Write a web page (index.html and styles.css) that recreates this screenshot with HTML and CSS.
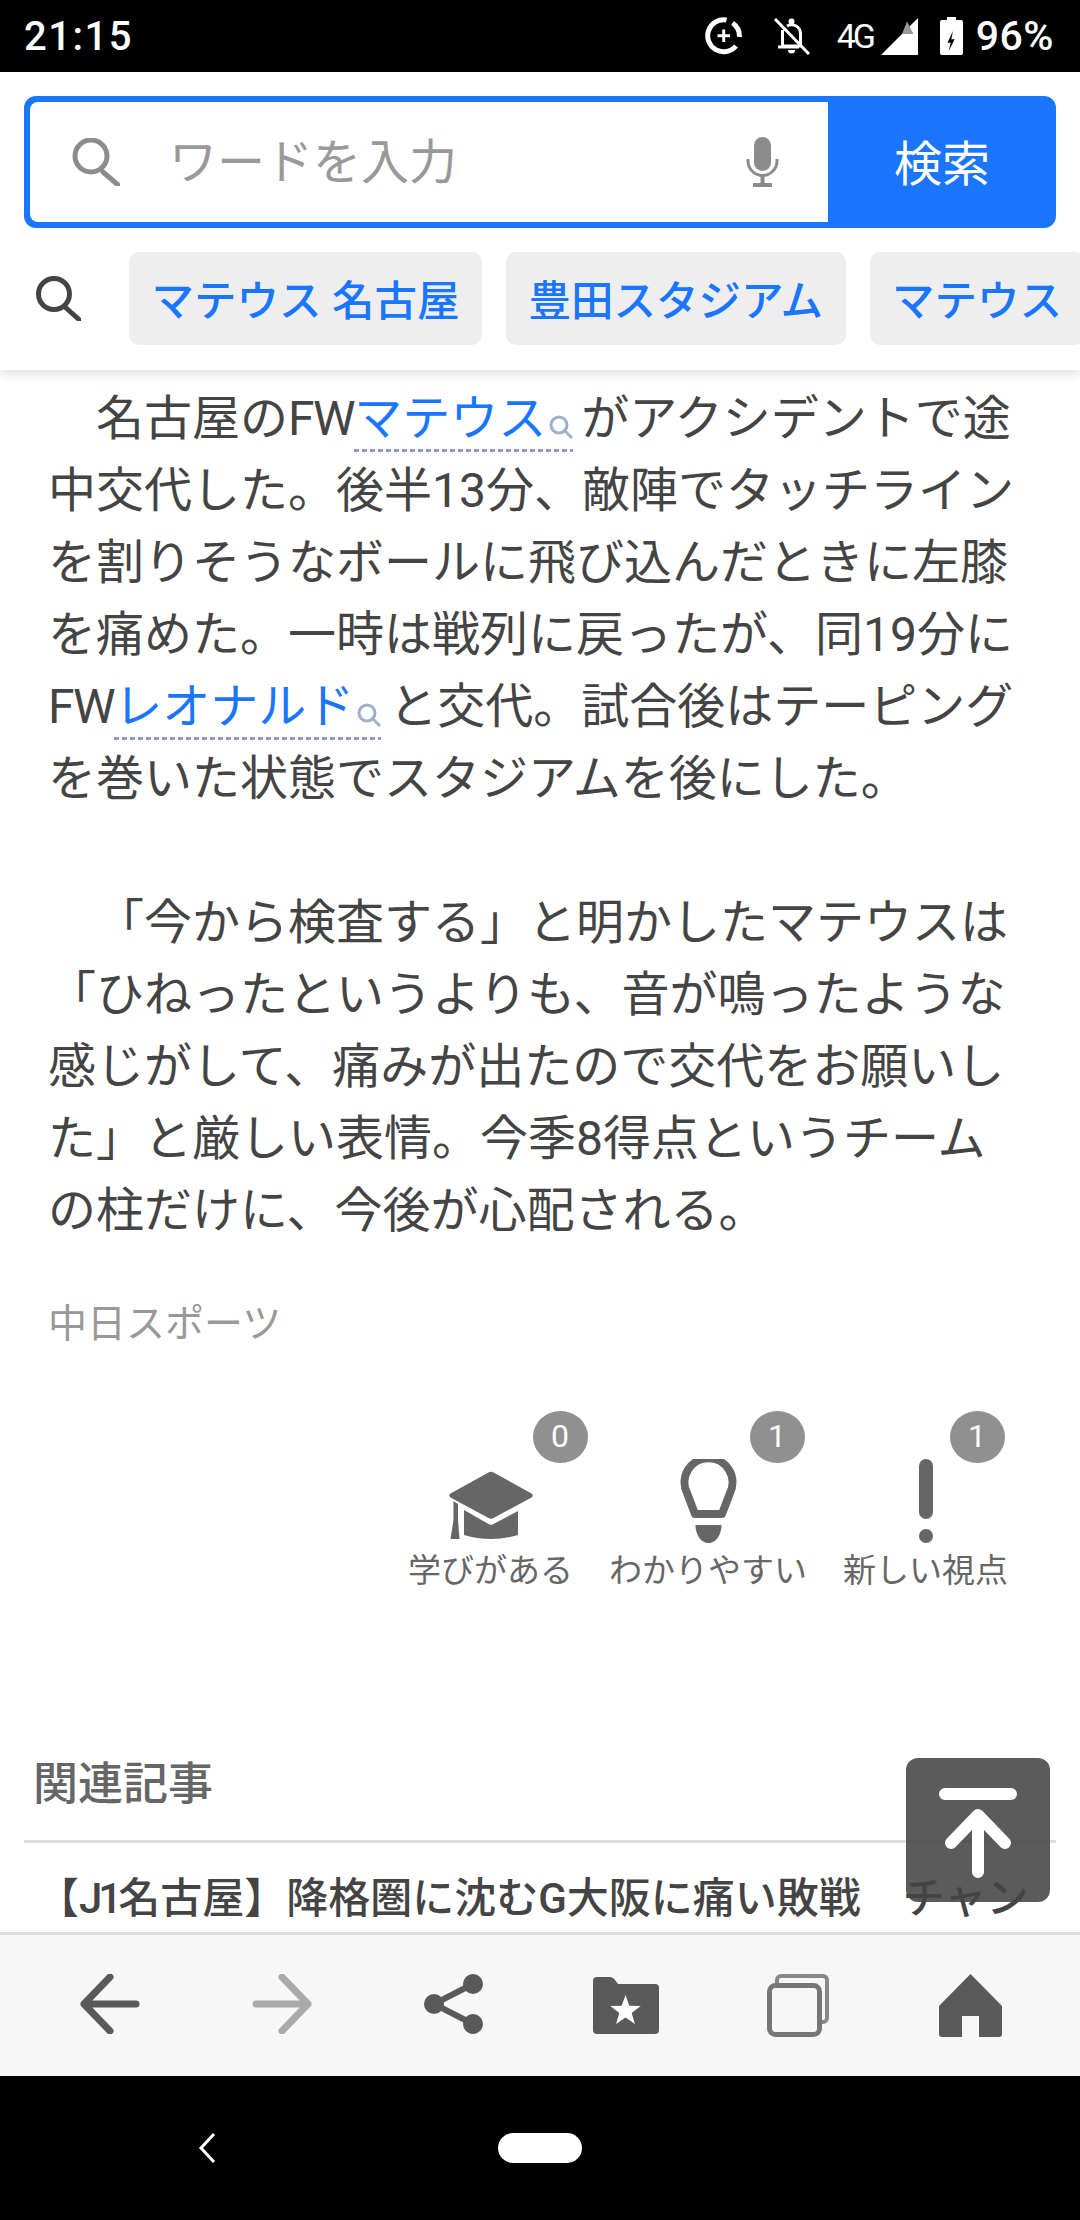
FILE: index.html
```html
<!DOCTYPE html>
<html lang="ja">
<head>
    <meta charset="UTF-8">
    <meta name="viewport" content="width=device-width, initial-scale=1.0">
    <title>マテウス 途中交代</title>
    <link rel="stylesheet" href="styles.css">
</head>
<body>
<div class="page">
    <div class="status-bar">
        <span class="status-time">21:15</span>
        <svg class="st-saver" width="37" height="38" viewBox="0 0 37 38"><path d="M21.5 3A16 16 0 1 0 31 29" fill="none" stroke="#fff" stroke-width="5"/><path d="M27.5 6A16 16 0 0 1 34.4 20" fill="none" stroke="#fff" stroke-width="5"/><path d="M18.7 12.5V25M12.5 18.7H25" stroke="#fff" stroke-width="3"/></svg>
        <svg class="st-bell" width="37" height="37" viewBox="0 0 37 37"><path d="M9.5 12V28H27.5V15A9 9 0 0 0 14 8" fill="none" stroke="#fff" stroke-width="3"/><path d="M5 29H26M2 1L36 36" stroke="#fff" stroke-width="3"/><circle cx="18.5" cy="3.5" r="3" fill="#fff"/><path d="M15 32H22A3.5 3.5 0 0 1 15 32Z" fill="#fff"/></svg>
        <span class="status-net">4G</span>
        <svg class="st-signal" width="37" height="37" viewBox="0 0 37 37"><polygon points="0,37 37,0 37,37" fill="#fff"/><polygon points="21,16 26,3.5 32.5,16" fill="#999"/></svg>
        <svg class="st-batt" width="23" height="38" viewBox="0 0 23 38"><path d="M7 0H16V3H21A2 2 0 0 1 23 5V36A2 2 0 0 1 21 38H2A2 2 0 0 1 0 36V5A2 2 0 0 1 2 3H7Z" fill="#fff"/><polygon points="13,14 7.5,25.7 10.7,25.7 8.7,34 14.7,22.3 11.3,22.3" fill="#000"/></svg>
        <span class="status-pct">96%</span>
    </div>

    <header class="site-header">
        <div class="search-box">
            <div class="search-field">
                <svg width="48" height="48" viewBox="0 0 48 48"><circle cx="19" cy="18" r="16" fill="none" stroke="#8c8c8c" stroke-width="5"/><path d="M31 34L45.5 46.5" stroke="#8c8c8c" stroke-width="5" stroke-linecap="round"/></svg>
                <span class="search-placeholder">ワードを入力</span>
                <svg class="search-mic" width="33" height="50" viewBox="0 0 33 50"><rect x="8" y="0" width="17" height="34" rx="8.5" fill="#8c8c8c"/><path d="M2 22V24A14.500 14.500 0 0 0 31 24V22" fill="none" stroke="#8c8c8c" stroke-width="3"/><path d="M16.500 38V46" stroke="#8c8c8c" stroke-width="4"/><rect x="7" y="46" width="19" height="4" fill="#8c8c8c"/></svg>
            </div>
            <div class="search-button">検索</div>
        </div>
        <div class="tag-row">
            <svg class="tag-icon" width="45" height="45" viewBox="0 0 45 45"><circle cx="18" cy="18" r="15.500" fill="none" stroke="#444" stroke-width="5"/><path d="M29 31L43 43.500" stroke="#444" stroke-width="5" stroke-linecap="round"/></svg>
            <a class="tag">マテウス 名古屋</a>
            <a class="tag">豊田スタジアム</a>
            <a class="tag">マテウス</a>
        </div>
    </header>

    <main class="content">
        <article class="article">
            <p>　名古屋の<span class="latin">FW</span><a class="kw">マテウス<svg width="24" height="24" viewBox="0 0 24 24"><circle cx="10" cy="10" r="8" fill="none" stroke="#9fb0cc" stroke-width="3"/><path d="M16 16L23 23" stroke="#9fb0cc" stroke-width="3"/></svg></a>がアクシデントで途中交代した。後半13分、敵陣でタッチラインを割りそうなボールに飛び込んだときに左膝を痛めた。一時は戦列に戻ったが、同19分に<span class="latin">FW</span><a class="kw">レオナルド<svg width="24" height="24" viewBox="0 0 24 24"><circle cx="10" cy="10" r="8" fill="none" stroke="#9fb0cc" stroke-width="3"/><path d="M16 16L23 23" stroke="#9fb0cc" stroke-width="3"/></svg></a>と交代。試合後はテーピングを巻いた状態でスタジアムを後にした。</p>
            <p class="quote">　「今から検査する」と明かしたマテウスは「ひねったというよりも、音が鳴ったような感じがして、痛みが出たので交代をお願いした」と厳しい表情。今季8得点というチームの柱だけに、今後が心配される。</p>
            <div class="credit">中日スポーツ</div>
        </article>

        <div class="reactions">
            <div class="reaction">
                <div class="reaction-icon">
                    <svg class="cap-icon" width="84" height="68" viewBox="0 0 84 68"><path d="M39.500 1.500Q42 0 44.500 1.500L82.500 22.500Q85 24.500 82.500 26.500L44.500 47Q42 48.500 39.500 47L1.500 26.500Q-1 24.500 1.500 22.500Z" fill="#666"/><path d="M15 39L39.500 53Q42 54.500 44.500 53L69 40V64Q56 68 42 68Q28 68 15 64Z" fill="#666"/><path d="M4.500 30L9 33V49L10.500 68H1.500L4.500 49Z" fill="#666"/></svg>
                    <span class="badge badge-cap">0</span>
                </div>
                <div class="reaction-label">学びがある</div>
            </div>
            <div class="reaction">
                <div class="reaction-icon">
                    <svg width="57" height="84" viewBox="0 0 57 84"><path d="M15 55L7 34A24 24 0 1 1 50 34L42 55Z" fill="none" stroke="#666" stroke-width="8" stroke-linejoin="round"/><path d="M15.500 66H41.500C41.500 76 36 84 28.500 84C21 84 15.500 76 15.500 66Z" fill="#666"/></svg>
                    <span class="badge badge-bulb">1</span>
                </div>
                <div class="reaction-label">わかりやすい</div>
            </div>
            <div class="reaction">
                <div class="reaction-icon">
                    <svg width="14" height="84" viewBox="0 0 14 84"><rect x="0" y="0" width="14" height="60" rx="7" fill="#666"/><circle cx="7" cy="77" r="7" fill="#666"/></svg>
                    <span class="badge badge-new">1</span>
                </div>
                <div class="reaction-label">新しい視点</div>
            </div>
        </div>

        <section class="related">
            <h2 class="related-title">関連記事</h2>
            <div class="related-item">【<span class="related-league">J1</span>名古屋】降格圏に沈むG大阪に痛い敗戦　チャン</div>
        </section>
    </main>

    <div class="to-top">
        <svg width="144" height="144" viewBox="0 0 144 144"><rect x="33" y="30" width="78" height="12" rx="6" fill="#fff"/><path d="M45 85L72 57L99 85M72 60V114" fill="none" stroke="#fff" stroke-width="12" stroke-linecap="round" stroke-linejoin="round"/></svg>
    </div>

    <nav class="toolbar">
        <div class="tool tool-raised"><svg width="60" height="60" viewBox="0 0 60 60"><path d="M30 3L4 30L30 57M4 30H56" fill="none" stroke="#595959" stroke-width="7" stroke-linecap="round" stroke-linejoin="round"/></svg></div>
        <div class="tool tool-raised"><svg width="60" height="60" viewBox="0 0 60 60"><path d="M30 3L56 30L30 57M56 30H4" fill="none" stroke="#aaa" stroke-width="7" stroke-linecap="round" stroke-linejoin="round"/></svg></div>
        <div class="tool tool-raised"><svg width="60" height="60" viewBox="0 0 60 60"><path d="M49 10L10 30L49 50" fill="none" stroke="#595959" stroke-width="6"/><circle cx="49" cy="10" r="10" fill="#595959"/><circle cx="10" cy="30" r="10" fill="#595959"/><circle cx="49" cy="50" r="10" fill="#595959"/></svg></div>
        <div class="tool"><svg width="66" height="57" viewBox="0 0 66 57"><path d="M4 0H17Q20 0 22 3L25 7H62A4 4 0 0 1 66 11V53A4 4 0 0 1 62 57H4A4 4 0 0 1 0 53V4A4 4 0 0 1 4 0Z" fill="#595959"/><polygon points="32.500,18 36.300,28.700 47.700,29.100 38.700,36 41.900,46.900 32.500,40.500 23.100,46.900 26.300,36 17.300,29.100 28.700,28.700" fill="#fff"/></svg></div>
        <div class="tool"><svg width="62" height="63" viewBox="0 0 62 63"><path d="M10 9V6A4 4 0 0 1 14 2H56A4 4 0 0 1 60 6V44A4 4 0 0 1 56 48H53" fill="none" stroke="#888" stroke-width="4"/><rect x="2.500" y="11.500" width="50" height="49" rx="6" fill="none" stroke="#777" stroke-width="5"/></svg></div>
        <div class="tool"><svg width="63" height="63" viewBox="0 0 63 63"><path d="M31.500 0L63 32V60A3 3 0 0 1 60 63H40V42H23V63H3A3 3 0 0 1 0 60V32Z" fill="#595959"/></svg></div>
    </nav>

    <div class="nav-bar">
        <svg width="18" height="30" viewBox="0 0 18 30"><path d="M16 1L3 15L16 29" fill="none" stroke="#fff" stroke-width="3"/></svg>
        <div class="nav-pill"></div>
    </div>
</div>
</body>
</html>
```

FILE: styles.css
```css
body {
    margin: 0;
    font-family: Roboto, "Noto Sans CJK JP", sans-serif;
    color: #444;
    background-color: #fff;
}
a {
    color: inherit;
    text-decoration: none;
}
.page {
    position: relative;
    display: flex;
    flex-direction: column;
    width: 1080px;
    height: 2220px;
    overflow: hidden;
}

/* status bar */
.status-bar {
    display: flex;
    align-items: center;
    flex: none;
    height: 72px;
    padding: 0 26px 0 24px;
    background-color: #000;
    color: #fff;
}
.status-time {
    margin-right: auto;
    font-size: 40px;
    font-weight: 500;
    letter-spacing: 1.5px;
}
.status-net {
    width: 37px;
    margin-left: 27px;
    font-size: 34px;
    letter-spacing: -3px;
    white-space: nowrap;
}
.status-pct {
    margin-left: 13px;
    font-size: 41px;
    font-weight: 500;
    letter-spacing: 0.5px;
}
.st-bell {
    margin-left: 31px;
}
.st-signal {
    margin-left: 7px;
}
.st-batt {
    margin-left: 22px;
}

/* header */
.site-header {
    position: relative;
    z-index: 1;
    flex: none;
    height: 298px;
    box-sizing: border-box;
    padding-top: 24px;
    background-color: #fff;
    box-shadow: 0 2px 12px rgba(0, 0, 0, 0.16);
}
.search-box {
    display: flex;
    height: 132px;
    margin: 0 24px;
    border-radius: 12px;
    background-color: #1a75ff;
    overflow: hidden;
}
.search-field {
    display: flex;
    align-items: center;
    width: 798px;
    box-sizing: border-box;
    margin: 6px 0 6px 6px;
    padding: 0 49px 0 42px;
    border-radius: 8px 0 0 8px;
    background-color: #fff;
}
.search-placeholder {
    margin-left: 49px;
    padding-bottom: 8px;
    color: #999;
    font-size: 48px;
}
.search-mic {
    margin-left: auto;
}
.search-button {
    flex: 1;
    display: flex;
    align-items: center;
    justify-content: center;
    padding-bottom: 5px;
    color: #fff;
    font-size: 48px;
}
.tag-row {
    display: flex;
    align-items: center;
    height: 93px;
    margin-top: 24px;
    padding-left: 36px;
    overflow: hidden;
}
.tag-icon {
    flex: none;
    margin-right: 48px;
}
.tag {
    flex: none;
    display: flex;
    align-items: center;
    height: 93px;
    box-sizing: border-box;
    margin-right: 24px;
    padding: 0 22.5px 2px;
    border-radius: 10px;
    background-color: #eee;
    color: #1a75ff;
    font-size: 42.5px;
    font-weight: 500;
}

/* article */
.content {
    flex: 1;
    overflow: hidden;
}
.article {
    padding: 13px 48px 0;
    font-size: 48px;
    line-height: 72px;
}
.article p {
    margin: 0 0 72px;
}
.article .quote {
    margin-bottom: 0;
    text-indent: 24px;
}
.latin {
    letter-spacing: -1.5px;
}
.kw {
    margin-right: 8px;
    padding-bottom: 5px;
    color: #1a75ff;
    background: repeating-linear-gradient(90deg, #8a9bbd 0, #8a9bbd 5px, transparent 5px, transparent 8px) 0 100% / 100% 3px no-repeat;
}
.kw svg {
    vertical-align: -4px;
    margin-left: 3px;
}
.credit {
    margin-top: 50px;
    color: #999;
    font-size: 39px;
    line-height: 54px;
}

/* reactions */
.reactions {
    display: flex;
    justify-content: flex-end;
    gap: 36px;
    margin-top: 108px;
    padding-right: 72px;
}
.reaction {
    display: flex;
    flex-direction: column;
    align-items: center;
}
.reaction-icon {
    position: relative;
    display: flex;
    align-items: flex-end;
    height: 84px;
}
.reaction-icon svg {
    display: block;
}
.reaction-icon .cap-icon {
    margin-bottom: 4px;
}
.reaction-label {
    margin-top: 3px;
    color: #666;
    font-size: 33px;
    line-height: 50px;
}
.badge {
    position: absolute;
    top: -48px;
    width: 55px;
    height: 52px;
    border-radius: 50%;
    background-color: #909090;
    color: #fff;
    font-size: 32px;
    line-height: 50px;
    text-align: center;
}
.badge-cap {
    left: 84px;
}
.badge-bulb {
    left: 70px;
}
.badge-new {
    left: 31px;
}

/* related articles */
.related {
    margin-top: 159px;
    padding: 0 24px;
}
.related-title {
    margin: 0;
    padding: 0 0 25px 9px;
    border-bottom: 3px solid #ddd;
    color: #666;
    font-size: 45px;
    font-weight: 500;
    line-height: 60px;
}
.related-item {
    padding: 26px 0 0 13px;
    font-size: 42px;
    font-weight: 500;
    line-height: 60px;
    white-space: nowrap;
}
.related-league {
    letter-spacing: -4px;
}

/* floating button */
.to-top {
    position: absolute;
    right: 30px;
    bottom: 318px;
    width: 144px;
    height: 144px;
    border-radius: 12px;
    background-color: rgba(68, 68, 68, 0.88);
}

/* bottom bars */
.toolbar {
    display: grid;
    grid-template-columns: repeat(6, 1fr);
    align-items: center;
    justify-items: center;
    flex: none;
    height: 141px;
    padding: 0 24px;
    border-top: 3px solid #ddd;
    background-color: #f7f7f7;
}
.tool svg {
    display: block;
}
.tool-raised {
    margin-bottom: 3px;
}
.nav-bar {
    display: flex;
    align-items: center;
    flex: none;
    gap: 282px;
    height: 144px;
    padding-left: 198px;
    background-color: #000;
}
.nav-pill {
    width: 84px;
    height: 30px;
    border-radius: 15px;
    background-color: #fff;
}
```
